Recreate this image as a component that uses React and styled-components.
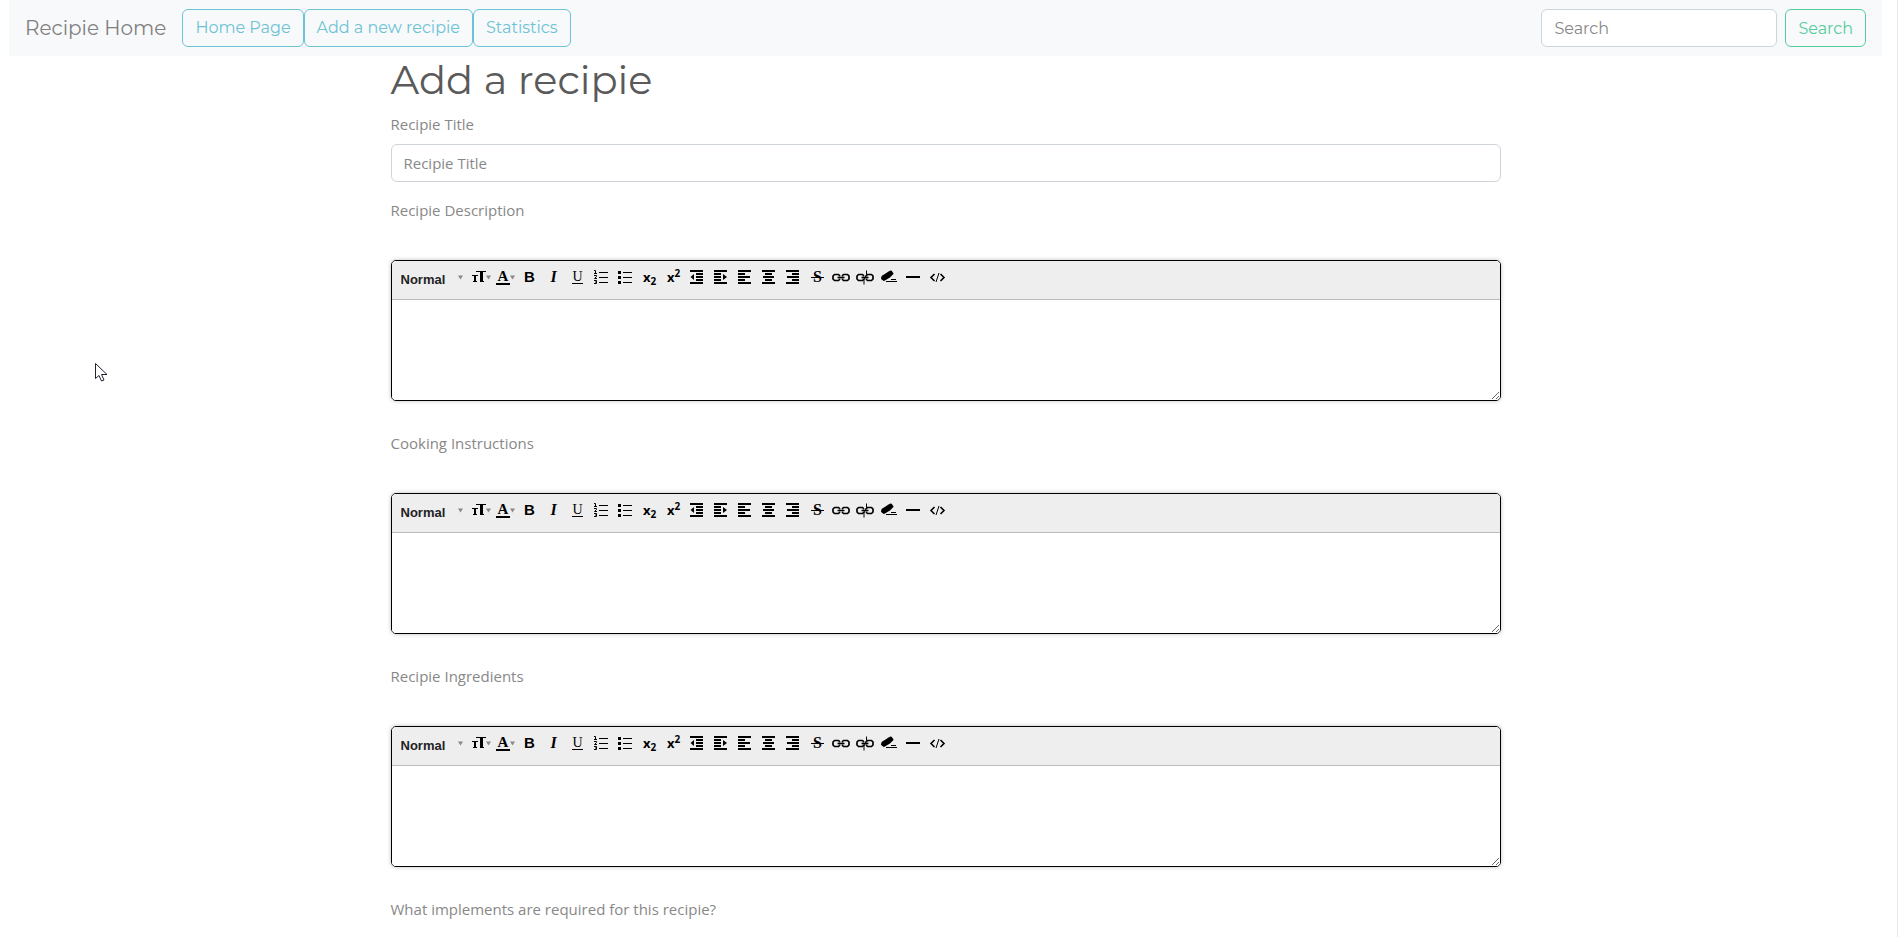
import React from "react";
import styled, { createGlobalStyle } from "styled-components";

const display = '"Montserrat", "Inter", "Liberation Sans", sans-serif';
const body = '"Segoe UI", "Open Sans", "Noto Sans", sans-serif';

const GlobalStyle = createGlobalStyle`
  *, *::before, *::after { box-sizing: border-box; }
  body {
    margin: 0;
    background: #fff;
    color: #888;
    font-family: ${body};
    font-size: 15px;
    line-height: 24px;
  }
`;

const Page = styled.div`
  min-height: 100vh;
  padding: 0 15px 0 9px;
  border-right: 1px solid #e8e8e8;
`;

const Navbar = styled.nav`
  display: flex;
  align-items: center;
  height: 56px;
  padding: 0 16px;
  background: #f8f9fa;
  font-family: ${display};
  font-weight: 400;
`;

const Brand = styled.a`
  margin-right: 16px;
  color: #808080;
  font-size: 20px;
  text-decoration: none;
  white-space: nowrap;
`;

const NavLinks = styled.div`
  display: flex;
  flex: 1;
`;

const outline = `
  height: 38px;
  padding: 0 12px;
  border: 1px solid currentColor;
  border-radius: 6px;
  background: transparent;
  font-family: ${display};
  font-size: 16px;
  font-weight: 400;
  line-height: 35px;
  text-align: center;
  text-decoration: none;
  white-space: nowrap;
`;

const NavButton = styled.a`
  ${outline}
  color: #6cc3d5;
`;

const SearchForm = styled.form`
  display: flex;
  gap: 8px;
`;

const SearchButton = styled.button`
  ${outline}
  color: #56cc9d;
`;

const TextField = styled.input`
  width: ${(p) => p.$width || "100%"};
  height: 38px;
  padding: 0 12px;
  border: 1px solid #ced4da;
  border-radius: 6px;
  background: #fff;
  color: #888;
  font: inherit;
  font-size: ${(p) => p.$size || "15px"};

  &::placeholder {
    color: #888;
    opacity: 1;
  }
`;

const Container = styled.main`
  width: 100%;
  max-width: 1110px;
  margin: 0 auto;
`;

const Title = styled.h1`
  margin: 0 0 8px;
  color: #5a5a5a;
  font-family: ${display};
  font-size: 40px;
  font-weight: 400;
  line-height: 48px;
`;

const Field = styled.div`
  margin-bottom: ${(p) => p.$gap}px;
`;

const Label = styled.label`
  display: block;
  margin-bottom: ${(p) => p.$gap}px;
`;

const Question = styled.p`
  margin: 0;
`;

const Editor = styled.div`
  display: flex;
  flex-direction: column;
  overflow: hidden;
  border: 1px solid #000;
  border-radius: 5px;
  background: #fff;
  box-shadow: 0 0 4px rgba(0, 0, 0, 0.25);
`;

const Toolbar = styled.div`
  display: flex;
  align-items: center;
  height: 39px;
  padding: 0 9px 6px;
  border-bottom: 1px solid #bbb;
  background: #eee;
`;

const FormatPicker = styled.span`
  display: flex;
  align-items: center;
  width: 68px;
  padding-right: 6px;
`;

const FormatSelect = styled.select`
  flex: 1;
  min-width: 0;
  height: 24px;
  padding: 4px 0 0;
  border: 0;
  appearance: none;
  background: transparent;
  color: #222;
  font-family: Arial, "Liberation Sans", sans-serif;
  font-size: 13px;
  font-weight: 700;
`;

const Tool = styled.button`
  display: flex;
  align-items: center;
  justify-content: center;
  width: 24px;
  height: 24px;
  padding: 0;
  border: 0;
  background: transparent;
  color: #000;
`;

const Glyph = styled.span`
  margin-left: 2px;
  padding: 0 ${(p) => p.$pad || 0}px;
  border-bottom: ${(p) => p.$rule || 0}px solid #000;
  font-family: ${(p) =>
    p.$serif ? '"Liberation Serif", serif' : '"Liberation Sans", sans-serif'};
  font-size: ${(p) => p.$size || 15}px;
  font-style: ${(p) => (p.$italic ? "italic" : "normal")};
  font-weight: ${(p) => (p.$light ? 400 : 700)};
  line-height: ${(p) => p.$line || 16}px;
`;

const StruckGlyph = styled(Glyph)`
  padding: 0 2px;
  background: linear-gradient(#000, #000) center / 100% 1px no-repeat;
`;

const Script = styled.span`
  display: flex;
  align-items: ${(p) => (p.$up ? "flex-start" : "flex-end")};
  height: 16px;
  margin-left: 2px;
  font-family: "Open Sans", sans-serif;
  font-size: 13px;
  font-weight: 700;
  line-height: 16px;

  small {
    font-size: 10px;
    line-height: 8px;
  }
`;

const Area = styled.textarea`
  display: block;
  width: 100%;
  height: 100px;
  padding: 12px;
  border: 0;
  outline: 0;
  resize: vertical;
  background: #fff;
  color: #222;
  font: inherit;
`;

const Pointer = styled.svg`
  position: absolute;
  left: 95px;
  top: 362px;
  pointer-events: none;
`;

const Caret = () => (
  <svg width="5" height="5" viewBox="0 0 5 5" aria-hidden="true">
    <path d="M0 .5h5L2.5 4.5z" fill="#888" />
  </svg>
);

const Icon = ({ children, width = 18 }) => (
  <svg
    width={width}
    height="16"
    viewBox={`0 0 ${width} 16`}
    fill="none"
    stroke="#000"
    aria-hidden="true"
  >
    {children}
  </svg>
);

const Lines = ({ d }) => (
  <Icon>
    <path strokeWidth="2" d={d} />
  </Icon>
);

const Chain = () => (
  <>
    <path
      strokeWidth="1.7"
      strokeLinejoin="round"
      d="M7.500 7.500V6.500L6.500 5.500H2.500L1 7v3l1.500 1.500h4l1-1V9.500M10.500 7.500V6.500l1-1h4L17 7v3l-1.500 1.500h-4l-1-1V9.500"
    />
    <path strokeWidth="1.300" d="M5.500 8.500h7" />
  </>
);

const TOOLS = [
  [
    "Font size",
    <>
      <Icon width={15}>
        <path d="M5 2.500h10M1 6.500h6M2 12.500h4M9 12.500h4" />
        <path strokeWidth="3" d="M10.500 3v10" />
        <path strokeWidth="2" d="M4 7v6" />
      </Icon>
      <Caret />
    </>,
  ],
  [
    "Text colour",
    <>
      <Glyph $serif $size={15} $line={13} $rule={2} $pad={2}>A</Glyph>
      <Caret />
    </>,
  ],
  ["Bold", <Glyph>B</Glyph>],
  ["Italic", <Glyph $serif $italic $size={16}>I</Glyph>],
  ["Underline", <Glyph $serif $light $size={14} $line={13} $rule={1}>U</Glyph>],
  [
    "Numbered list",
    <Icon>
      <path d="M7 3.500h9M7 8.500h9M7 13.500h9" />
      <path d="M2 1.500h1.500v3M2 4.500h3M2 6.500h2.500v1L2.500 9.500H5M2 11.500h2.500v3H2M3 13h1.500" />
    </Icon>,
  ],
  [
    "Bulleted list",
    <Icon>
      <path d="M7 3.500h9M7 8.500h9M7 13.500h9" />
      <path strokeWidth="3" d="M2 3.500h3M2 8.500h3M2 13.500h3" />
    </Icon>,
  ],
  ["Subscript", <Script>x<small>2</small></Script>],
  ["Superscript", <Script $up>x<small>2</small></Script>],
  [
    "Outdent",
    <Icon>
      <path strokeWidth="2" d="M2 2h13M8 5h7M8 8h7M8 11h7M2 14h13" />
      <path d="M6 5v6L2.500 8z" fill="#000" stroke="none" />
    </Icon>,
  ],
  [
    "Indent",
    <Icon>
      <path strokeWidth="2" d="M2 2h13M2 5h7M2 8h7M2 11h7M2 14h13" />
      <path d="M11 5v6l4-3z" fill="#000" stroke="none" />
    </Icon>,
  ],
  ["Align left", <Lines d="M2 2h13M2 5h7M2 8h12M2 11h7M2 14h13" />],
  ["Align centre", <Lines d="M2 2h13M5 5h7M3 8h11M5 11h7M2 14h13" />],
  ["Align right", <Lines d="M2 2h13M8 5h7M3 8h12M8 11h7M2 14h13" />],
  ["Strikethrough", <StruckGlyph $serif $size={16}>S</StruckGlyph>],
  ["Insert link", <Icon><Chain /></Icon>],
  [
    "Remove link",
    <Icon>
      <Chain />
      <path d="M10.500 1.500v4L8 11v4.500" />
    </Icon>,
  ],
  [
    "Clear formatting",
    <Icon>
      <path d="M8 4l3-1.500 1.500 2L9 8l-5 3-2-1.500.5-2z" fill="#000" strokeWidth="2" strokeLinejoin="round" />
      <path d="M11 10.500h5M6 12.500h11" />
    </Icon>,
  ],
  ["Horizontal rule", <Lines d="M2 8h14" />],
  [
    "Code view",
    <Icon>
      <path strokeWidth="1.600" d="M6.500 5 3 8.500 6.500 12M12.500 5 16 8.500 12.500 12" />
      <path d="M11 4L8 13" />
    </Icon>,
  ],
];

const RichEditor = ({ id, label }) => (
  <Field $gap={30}>
    <Label htmlFor={id} $gap={38}>{label}</Label>
    <Editor>
      <Toolbar role="toolbar" aria-label={label}>
        <FormatPicker>
          <FormatSelect aria-label="Paragraph format" defaultValue="Normal">
            <option>Normal</option>
          </FormatSelect>
          <Caret />
        </FormatPicker>
        {TOOLS.map(([name, icon]) => (
          <Tool key={name} type="button" aria-label={name}>{icon}</Tool>
        ))}
      </Toolbar>
      <Area id={id} />
    </Editor>
  </Field>
);

export default function App() {
  return (
    <Page>
      <GlobalStyle />
      <Navbar>
        <Brand href="#home">Recipie Home</Brand>
        <NavLinks>
          <NavButton href="#home">Home Page</NavButton>
          <NavButton href="#add">Add a new recipie</NavButton>
          <NavButton href="#statistics">Statistics</NavButton>
        </NavLinks>
        <SearchForm role="search">
          <TextField
            type="search"
            placeholder="Search"
            aria-label="Search"
            $width="236px"
            $size="16px"
          />
          <SearchButton type="button">Search</SearchButton>
        </SearchForm>
      </Navbar>
      <Container>
        <Title>Add a recipie</Title>
        <Field $gap={16}>
          <Label htmlFor="title" $gap={8}>Recipie Title</Label>
          <TextField id="title" type="text" placeholder="Recipie Title" />
        </Field>
        <RichEditor id="description" label="Recipie Description" />
        <RichEditor id="instructions" label="Cooking Instructions" />
        <RichEditor id="ingredients" label="Recipie Ingredients" />
        <Question>What implements are required for this recipie?</Question>
      </Container>
      <Pointer width="14" height="21" viewBox="0 0 14 21" aria-hidden="true">
        <path
          d="M.5 1.500v15l3.500-3 2.500 5.500 2.500-1-2.500-5.500H12z"
          fill="#fff"
          stroke="#223"
        />
      </Pointer>
    </Page>
  );
}
